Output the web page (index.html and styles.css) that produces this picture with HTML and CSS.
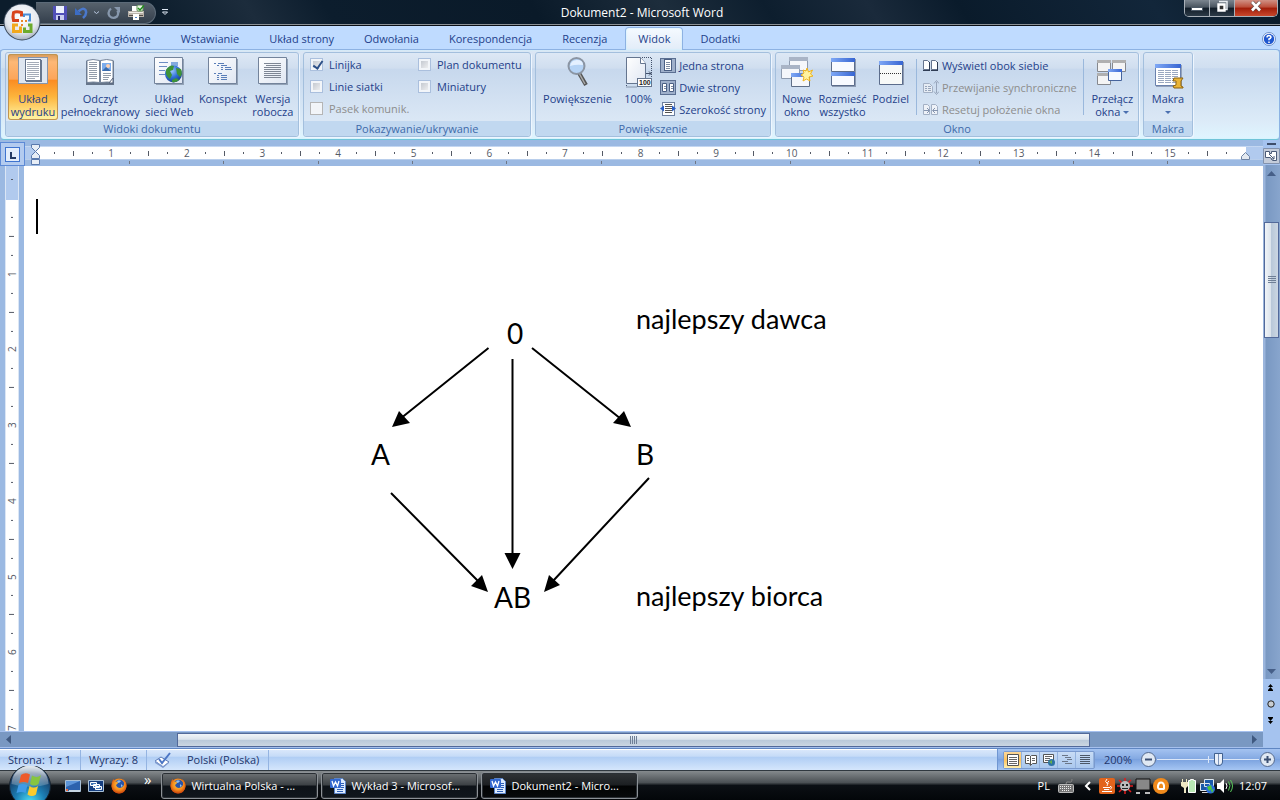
FILE: index.html
```html
<!DOCTYPE html>
<html lang="pl">
<head>
  <meta charset="UTF-8" />
  <meta name="viewport" content="width=device-width, initial-scale=1.0" />
  <title>Dokument2 - Microsoft Word</title>
  <link rel="stylesheet" href="styles.css">
</head>
<body>
  <!-- gradients shared by the icons -->
  <svg class="defs" width="0" height="0" aria-hidden="true">
    <defs>
      <linearGradient id="paper" x1="0" y1="0" x2="1" y2="1"><stop offset="0" stop-color="#fff"/><stop offset="1" stop-color="#dfe6f2"/></linearGradient>
      <linearGradient id="bar" x1="0" y1="0" x2="1" y2="0"><stop offset="0" stop-color="#7fa8f5"/><stop offset="1" stop-color="#3765d2"/></linearGradient>
      <radialGradient id="globe" cx="0.4" cy="0.3" r="0.8"><stop offset="0" stop-color="#9cc8ff"/><stop offset="0.5" stop-color="#2f6fd6"/><stop offset="1" stop-color="#12337f"/></radialGradient>
      <radialGradient id="fox" cx="0.5" cy="0.4" r="0.6"><stop offset="0" stop-color="#ffd24a"/><stop offset="0.6" stop-color="#f58a1c"/><stop offset="1" stop-color="#c8420b"/></radialGradient>
      <radialGradient id="orb" cx="0.5" cy="0.9" r="0.9"><stop offset="0" stop-color="#4fe0f5"/><stop offset="0.4" stop-color="#1c7fb5"/><stop offset="0.8" stop-color="#173a63"/><stop offset="1" stop-color="#6c8fae"/></radialGradient>
      <linearGradient id="orbShine" x1="0" y1="0" x2="0" y2="1"><stop offset="0" stop-color="#fff" stop-opacity="0.85"/><stop offset="1" stop-color="#fff" stop-opacity="0.15"/></linearGradient>
      <radialGradient id="pearl" cx="0.5" cy="0.35" r="0.65"><stop offset="0" stop-color="#fff"/><stop offset="0.7" stop-color="#e3e7ee"/><stop offset="1" stop-color="#a9b3c2"/></radialGradient>
      <symbol id="firefox" viewBox="0 0 16 16">
        <circle cx="8" cy="8" r="7.500" fill="url(#fox)"/>
        <circle cx="8.500" cy="6.500" r="4.800" fill="#2a55a8"/>
        <path d="M6 3q2-1.500 4 0q-1 2-3 2zM10 6l2 2-2 1z" fill="#8fc0ee"/>
        <path d="M1 4Q2 1 3 1q0 2 1 3q2-1 3 0q0 2-2 3q1 3 4 3q3-.500 4-3q1-3-1-6q4 3 3.500 7.500Q14.500 15 8 15.500Q1 15 .500 8z" fill="url(#fox)"/>
      </symbol>
      <symbol id="wordicon" viewBox="0 0 16 16">
        <path d="M4.500 .500h8l3 3v12h-11z" fill="#dcebff" stroke="#5b84c8"/>
        <path d="M7 11.500h6M7 13.500h6M11 5.500h3M11 7.500h3M11 9.500h3" stroke="#2c5db5"/>
        <rect x="0" y="1" width="11" height="9" rx="1" fill="#3368cf"/>
        <path d="M2 3l1.500 5L5.500 4 7.500 8 9 3" fill="none" stroke="#fff" stroke-width="1.300"/>
      </symbol>
    </defs>
  </svg>

  <header class="titlebar">
    <button class="office" aria-label="Przycisk pakietu Office">
      <svg width="38" height="38" viewBox="0 0 38 38">
        <circle cx="19" cy="19" r="18.500" fill="#39485a"/>
        <circle cx="19" cy="19" r="17.500" fill="url(#pearl)"/>
        <g fill="none" stroke-width="3">
          <path d="M16 17.500h-5.500q-1-4 0-8q3-1.500 8 0v4" stroke="#d8421b"/>
          <path d="M21 14v-2.500h6v6h-2" stroke="#4a8ed8" stroke-width="2"/>
          <path d="M15 22h-4.500v6.500h7v-5" stroke="#f2a81d"/>
          <path d="M25 22h3v6.500h-6.500v-4" stroke="#6cab2c"/>
        </g>
        <path d="M18 17h2v2h-2zM22 17h2v2h-2zM18 21h2v2h-2z" fill="#e88a2a"/>
      </svg>
    </button>
    <div class="quick">
      <button aria-label="Zapisz"><svg width="14" height="14" viewBox="0 0 14 14"><path d="M0 0h14v14H1L0 13z" fill="#5150b8"/><path d="M3 0h8v7H3z" fill="#eef2ff"/><path d="M3 9h8v5H3z" fill="#c9cdf0"/><path d="M5 10h2v4H5z" fill="#25246e"/></svg></button>
      <button class="undo" aria-label="Cofnij"><svg width="14" height="14" viewBox="0 0 14 14"><path d="M3.500 5.500Q8 1 10.500 4Q12.500 8 8 12" fill="none" stroke="#4a78cc" stroke-width="2.500"/><path d="M0 2v7h7z" fill="#3b6cc4"/></svg></button>
      <button class="more" aria-label="Lista cofnij"><svg width="5" height="4" viewBox="0 0 5 4"><path d="M0 .500l2.500 2L5 .500" fill="none" stroke="#b9c9e2"/></svg></button>
      <button class="redo" aria-label="Powtórz"><svg width="14" height="14" viewBox="0 0 14 14"><path d="M4 2.500Q0 6 2.500 10Q6 13.500 10 10.500Q12 8 10.500 4.500" fill="none" stroke="#8797ac" stroke-width="2.300"/><path d="M7 1h6v6z" fill="#8797ac"/></svg></button>
      <button aria-label="Szybkie drukowanie"><svg width="17" height="16" viewBox="0 0 17 16"><path d="M4 1h7v5H4z" fill="#fff"/><path d="M0 6h16v6H0z" fill="#b9b2aa"/><path d="M1 7h14v1H1z" fill="#efece8"/><path d="M1 10h14v1H1z" fill="#514b46"/><path d="M5 9h6v6H5z" fill="#fff"/><path d="M7 12h2v1H7z" fill="#4d80c8"/><rect x="9" y="0" width="6" height="6" rx="1" fill="#e8f3e4" stroke="#5d8f52"/><path d="M10 3l2 2 4-4.500" fill="none" stroke="#218c1c" stroke-width="1.500"/></svg></button>
    </div>
    <button class="customize" aria-label="Dostosuj pasek"><svg width="6" height="7" viewBox="0 0 6 7"><path d="M0 .500h6" stroke="#dfe8f4"/><path d="M.500 3h5L3 5.500z" fill="none" stroke="#dfe8f4"/></svg></button>
    <h1>Dokument2 - Microsoft Word</h1>
    <div class="window-buttons">
      <button class="min" aria-label="Minimalizuj"><svg width="12" height="12" viewBox="0 0 12 12"><path d="M.500 7.500h11v3H.500z" fill="#fff" stroke="#4b5866"/></svg></button>
      <button class="restore" aria-label="Przywróć"><svg width="12" height="13" viewBox="0 0 12 13"><path d="M3 1.500h8v8H9" fill="none" stroke="#e6eaef" stroke-width="1.500"/><path d="M2.500 4.500h6v6h-6z" fill="#333" stroke="#fff" stroke-width="2.400"/></svg></button>
      <button class="close" aria-label="Zamknij"><svg width="12" height="12" viewBox="0 0 12 12"><path d="M2 2l8 8.500M10 2l-8 8.500" stroke="#55423f" stroke-width="4"/><path d="M2 2l8 8.500M10 2l-8 8.500" stroke="#fff" stroke-width="2.600"/></svg></button>
    </div>
  </header>

  <nav class="tabs">
    <a href="#">Narzędzia główne</a>
    <a href="#">Wstawianie</a>
    <a href="#">Układ strony</a>
    <a href="#">Odwołania</a>
    <a href="#">Korespondencja</a>
    <a href="#">Recenzja</a>
    <a href="#" class="active">Widok</a>
    <a href="#">Dodatki</a>
    <button class="help" aria-label="Pomoc"><svg width="14" height="14" viewBox="0 0 14 14"><circle cx="7" cy="7" r="6.500" fill="#fff" stroke="#6d8fc9"/><circle cx="7" cy="7" r="5.200" fill="#1f57cf"/><path d="M5 5.500Q5 3.500 7 3.500Q9 3.700 9 5.200Q8.500 6.500 7 7v1.200M7 9.500v1.500" fill="none" stroke="#fff" stroke-width="1.500"/></svg></button>
  </nav>

  <section class="ribbon">
    <div class="group views">
      <div class="tools">
        <button class="big selected">
          <svg width="32" height="32" viewBox="0 0 32 32"><rect x="1.500" y=".500" width="29" height="26" fill="#dfe6f0" stroke="#8595ad"/><rect x="9" y="3" width="16" height="22" fill="#68778f"/><rect x="8.500" y="2.500" width="15" height="21" fill="#fff" stroke="#67758c"/><path d="M10 5.500h12M10 7.500h12M10 9.500h12M10 11.500h12M10 13.500h12M10 15.500h12M10 17.500h12M10 19.500h12M10 21.500h8" stroke="#a5acb8"/></svg>
          <span>Układ<br>wydruku</span>
        </button>
        <button class="big">
          <svg width="32" height="32" viewBox="0 0 32 32"><path d="M2 4l2-1h11l1 1 1-1h11l2 1v24H2z" fill="#66758a"/><path d="M3 3.500q6-2 12.500 0v22q-6-1-12.500 0zM16.500 3.500q6-2 12.500 0v22q-6-1-12.500 0z" fill="#fff" stroke="#75849a"/><path d="M5 5.500h8M5 7.500h8M5 9.500h8M5 11.500h8M5 13.500h8M5 15.500h8M5 17.500h8M5 19.500h8M5 21.500h8M19 16.500h8M19 18.500h8M19 20.500h6M19 22.500h5" stroke="#929caa"/><rect x="18" y="6" width="9" height="8" fill="#7cacec"/><circle cx="24" cy="9" r="2" fill="#fdd0b0"/><path d="M18 14l4-4 5 4z" fill="#3a6cae"/><path d="M25 26l4-5v5z" fill="#fff" stroke="#55627a"/></svg>
          <span>Odczyt<br>pełnoekranowy</span>
        </button>
        <button class="big">
          <svg width="32" height="32" viewBox="0 0 32 32"><path d="M3 2h28v26H3z" fill="#93a2b6"/><path d="M1.500 .500h28v26h-28z" fill="url(#paper)" stroke="#73839b"/><path d="M6 5.500h9M6 9.500h8M6 13.500h6M6 17.500h6" stroke="#6c8cc2"/><path d="M18 5h7v4h-7z" fill="#84aadf"/><circle cx="20.500" cy="17" r="8.500" fill="url(#globe)"/><path d="M13 13q4-6 8-4l-1 4-3 1 2 4-2 4q-5-3-4-9zM23 11l5 1q2 5-1 8l-3-3zM19 23l4-2 3 2q-3 3-7 2z" fill="#3e9338"/></svg>
          <span>Układ<br>sieci Web</span>
        </button>
        <button class="big">
          <svg width="32" height="32" viewBox="0 0 32 32"><path d="M3 2h28v26H3z" fill="#93a2b6"/><path d="M1.500 .500h28v26h-28z" fill="url(#paper)" stroke="#73839b"/><g stroke="#5a7eb8"><path d="M7 6.500h2M11 6.500h6M10 8.500h2M14 8.500h6M14 10.500h2M18 10.500h6M14 12.500h2M18 12.500h7M7 16.500h2M11 16.500h4M10 18.500h2M14 18.500h6M10 20.500h2M14 20.500h6M10 22.500h2M14 22.500h6"/></g></svg>
          <span>Konspekt</span>
        </button>
        <button class="big">
          <svg width="32" height="32" viewBox="0 0 32 32"><path d="M3 2h28v26H3z" fill="#93a2b6"/><path d="M1.500 .500h28v26h-28z" fill="url(#paper)" stroke="#73839b"/><path d="M7 6.500h17M9 8.500h15M7 10.500h17M7 12.500h17M7 14.500h17M7 16.500h17M7 18.500h17M7 20.500h17" stroke="#7e8694"/></svg>
          <span>Wersja<br>robocza</span>
        </button>
      </div>
      <h2>Widoki dokumentu</h2>
    </div>

    <div class="group show">
      <div class="tools checks">
        <label><input type="checkbox" checked> Linijka</label>
        <label><input type="checkbox"> Plan dokumentu</label>
        <label><input type="checkbox"> Linie siatki</label>
        <label><input type="checkbox"> Miniatury</label>
        <label class="off"><input type="checkbox" disabled> Pasek komunik.</label>
      </div>
      <h2>Pokazywanie/ukrywanie</h2>
    </div>

    <div class="group zoom">
      <div class="tools">
        <button class="big">
          <svg width="32" height="32" viewBox="0 0 32 32"><path d="M17 16l7 12" stroke="#555" stroke-width="4"/><path d="M17 16l6 11" stroke="#aaa" stroke-width="1.500"/><circle cx="14.500" cy="9" r="8" fill="#b5d3f5" stroke="#8b95a3" stroke-width="2"/><path d="M8 9q1-6 7-6t6 5q-7-1-13 1z" fill="#e4f0ff"/></svg>
          <span>Powiększenie</span>
        </button>
        <button class="big">
          <svg width="32" height="32" viewBox="0 0 32 32"><path d="M20 .500h9.500V30M4.500 28v2H15" fill="none" stroke="#42506a" stroke-dasharray="1 1"/><path d="M4.500 .500h14l5 6v20h-19z" fill="url(#paper)" stroke="#65758f"/><path d="M18.500 .500v6h5" fill="#fff" stroke="#65758f"/><path d="M24 16.500h5M27 14.500l2 2-2 2" fill="none" stroke="#42506a"/><rect x="15.500" y="21.500" width="14" height="8" fill="#fff" stroke="#65758f"/><text x="17" y="28" font-size="7" font-weight="700" fill="#222">100</text></svg>
          <span>100%</span>
        </button>
        <div class="list">
          <button><svg width="16" height="16" viewBox="0 0 16 16"><rect x=".500" y="1.500" width="15" height="14" fill="#9fb0cb" stroke="#5b6f92"/><rect x="4.500" y="2.500" width="7" height="11" fill="#fff" stroke="#4a5f84"/><path d="M6 5.500h4M6 7.500h4M6 9.500h4M6 11.500h4" stroke="#7d8ba3"/></svg>Jedna strona</button>
          <button><svg width="16" height="16" viewBox="0 0 16 16"><rect x=".500" y="1.500" width="15" height="14" fill="#9fb0cb" stroke="#5b6f92"/><path d="M2.500 4.500h4v8h-4zM9.500 4.500h4v8h-4z" fill="#fff" stroke="#4a5f84"/><path d="M4 7.500h2M4 9.500h2M11 7.500h2M11 9.500h2" stroke="#7d8ba3"/></svg>Dwie strony</button>
          <button><svg width="16" height="16" viewBox="0 0 16 16"><rect x="2.500" y="1.500" width="12" height="13" fill="#fff" stroke="#6c7f9f"/><path d="M5 3.500h7M5 5.500h7M5 7.500h7M5 9.500h7M5 11.500h7" stroke="#555"/><path d="M0 7.500l4-3v6zM16 7.500l-4-3v6z" fill="#2a5fc8"/></svg>Szerokość strony</button>
        </div>
      </div>
      <h2>Powiększenie</h2>
    </div>

    <div class="group window">
      <div class="tools">
        <button class="big">
          <svg width="32" height="32" viewBox="0 0 32 32"><path d="M8.500 .500h18v13h-18z" fill="#f5f7fb" stroke="#8f9cb0"/><path d="M8 0h19v4H8z" fill="#a9b4c6"/><path d="M.500 8.500h18v13h-18z" fill="#f5f7fb" stroke="#8f9cb0"/><path d="M0 8h19v4H0z" fill="#a9b4c6"/><path d="M10.500 16.500h18v13h-18z" fill="#f5f7fb" stroke="#5f6f88"/><path d="M10 16h19v4H10z" fill="url(#bar)"/><path d="M26 11l1.500 4 4-2-2 4 2.500 2-4 1 1 4-3.500-2-3.500 2 1-4-3-2 3-2-1-3 3 1z" fill="#fff3a0" stroke="#f0b41c"/></svg>
          <span>Nowe<br>okno</span>
        </button>
        <button class="big">
          <svg width="32" height="32" viewBox="0 0 32 32"><path d="M5 2h24v28H5z" fill="#8d9bb2"/><path d="M4.500 1.500h23v13h-23zM4.500 15.500h23v13h-23z" fill="#f8faff" stroke="#5c6d8c"/><path d="M4 1h24v4H4zM4 15h24v4H4z" fill="url(#bar)"/></svg>
          <span>Rozmieść<br>wszystko</span>
        </button>
        <button class="big">
          <svg width="32" height="32" viewBox="0 0 32 32"><path d="M5 5h24v23H5z" fill="#8d9bb2"/><path d="M4.500 4.500h23v23h-23z" fill="#f8faf8" stroke="#5c6d8c"/><path d="M4 4h24v4H4z" fill="url(#bar)"/><path d="M5 16.500h22" stroke="#333" stroke-dasharray="1 1"/></svg>
          <span>Podziel</span>
        </button>
        <div class="list split">
          <button><svg width="16" height="16" viewBox="0 0 16 16"><path d="M.500 3.500h4l2 2v7h-6zM8.500 3.500h4l2 2v7h-6z" fill="#fff" stroke="#66758f"/><path d="M0 13h7v1H0zM8 13h7v1H8zM6 5h1v8H6zM14 5h1v8h-1z" fill="#2f3d55"/></svg>Wyświetl obok siebie</button>
          <button disabled><svg width="16" height="16" viewBox="0 0 16 16"><path d="M.500 4.500h6l3 3v6h-9z" fill="#e6ecf4" stroke="#a3b0c4"/><path d="M2 7.500h2M5 7.500h3M2 9.500h2M5 9.500h3M2 11.500h2M5 11.500h3" stroke="#97a5bb"/><path d="M13.500 3v11M11 4.500l2.500-3 2.500 3M11 12.500l2.500 3 2.500-3" fill="none" stroke="#97a5bb"/></svg>Przewijanie synchroniczne</button>
          <button disabled><svg width="16" height="16" viewBox="0 0 16 16"><path d="M.500 3.500h4l2 2v8h-6zM8.500 3.500h4l2 2v8h-6z" fill="#eef2f8" stroke="#a3b0c4"/><path d="M1 9.500h5M4 7l2.500 2.500L4 12M15 9.500h-5M12 7L9.500 9.500 12 12" fill="none" stroke="#8595b0"/></svg>Resetuj położenie okna</button>
        </div>
        <button class="big">
          <svg width="32" height="32" viewBox="0 0 32 32"><path d="M1.500 3.500h13v11h-13zM16.500 3.500h13v11h-13zM1.500 16.500h13v11h-13z" fill="#f4f4f4" stroke="#85888e"/><path d="M1 3h14v3H1zM16 3h14v3H16zM1 16h14v3H1z" fill="#b0b0b0"/><path d="M12.500 12.500h13v11h-13z" fill="#f5f9ff" stroke="#46649c"/><path d="M12 12h14v3H12z" fill="url(#bar)"/></svg>
          <span>Przełącz<br>okna <i class="arrow"></i></span>
        </button>
      </div>
      <h2>Okno</h2>
    </div>

    <div class="group macros">
      <div class="tools">
        <button class="big">
          <svg width="32" height="32" viewBox="0 0 32 32"><path d="M4 8h26v22H4z" fill="#94a2ba"/><path d="M3.500 7.500h25v21h-25z" fill="#fff" stroke="#6a81ad"/><path d="M3 7h26v4H3z" fill="url(#bar)"/><path d="M6 13.500h20M6 15.500h20M6 17.500h20M6 19.500h20M6 21.500h20M6 23.500h20M6 25.500h20" stroke="#9aa8c0" stroke-dasharray="6 1"/><path d="M22 21h9l-2 3v5l2 1v1h-9l-1-2 3-1v-4h-3z" fill="#e9b437" stroke="#8c6311"/></svg>
          <span>Makra<br><i class="arrow"></i></span>
        </button>
      </div>
      <h2>Makra</h2>
    </div>
  </section>

  <main class="work">
    <div class="left">
      <div class="ruler-row">
        <button class="tabstop" aria-label="Tabulator"><svg width="15" height="15" viewBox="0 0 15 15"><rect x=".500" y=".500" width="14" height="14" fill="#e3edfb" stroke="#3f74cf"/><path d="M5 5h2v5h4v2H5z" fill="#243a63"/></svg></button>
        <div class="ruler">
          <div class="scale" id="scale-x">
            <svg class="indent" width="10" height="22" viewBox="0 0 10 22"><path d="M.500 .500h8v3l-4 4-4-4zM4.500 7.500l4 4v3h-8v-3z" fill="#e8eef6" stroke="#5a79ad"/><path d="M.500 15.500h8v5h-8z" fill="#e8eef6" stroke="#5a79ad"/></svg>
            <svg class="indent-right" width="9" height="8" viewBox="0 0 9 8"><path d="M.500 7.500v-3l4-4 4 4v3z" fill="#e3e9f0" stroke="#6d83a5"/></svg>
          </div>
          <div class="stops" id="stops"></div>
        </div>
      </div>
      <div class="desk">
        <div class="vruler"><div class="vscale" id="scale-y"></div></div>
        <article class="page">
          <div class="cursor"></div>
          <svg class="diagram" width="480" height="320" viewBox="0 0 480 320">
            <g stroke="#000" stroke-width="2">
              <path d="M128.500 48L40 119M152.500 59v200M172 48l89 71M31 193l87 88M289 178l-96 103"/>
            </g>
            <path d="M32 127l7-16 11 12zM152.500 269l-8-16h16zM271 127l-18-4 11-12zM128 292l-17-6 11-11zM184 292l5-17 11 10z"/>
            <text x="147" y="44">0</text>
            <text x="11" y="165">A</text>
            <text x="276" y="165">B</text>
            <text x="134" y="308">AB</text>
            <text class="note" x="276" y="29">najlepszy dawca</text>
            <text class="note" x="276" y="306">najlepszy biorca</text>
          </svg>
        </article>
      </div>
      <div class="hscroll">
        <svg width="5" height="9" viewBox="0 0 5 9"><path d="M5 0v9L0 4.500z" fill="#3f5980"/></svg>
        <div class="hthumb"><svg width="8" height="8" viewBox="0 0 8 8"><path d="M.500 0v8M2.500 0v8M4.500 0v8M6.500 0v8" stroke="#6f7f96"/></svg></div>
        <svg width="5" height="9" viewBox="0 0 5 9"><path d="M0 0v9l5-4.500z" fill="#3f5980"/></svg>
      </div>
    </div>
    <div class="right">
      <div class="splitter"></div>
      <button class="ruler-toggle" aria-label="Linijka"><svg width="17" height="16" viewBox="0 0 17 16"><path d="M.500 .500h16v15H.500z" fill="#c4ccda" stroke="#8292ae"/><path d="M2.500 3.500h4v2h2v-2h5v9h-4l-2-3h-5z" fill="#fff" stroke="#4b5b78"/><path d="M6 6l5 5M11 8v3h-3" fill="none" stroke="#4b5b78"/></svg></button>
      <div class="vscroll">
        <svg width="9" height="5" viewBox="0 0 9 5"><path d="M0 5h9L4.500 0z" fill="#465f88"/></svg>
        <div class="vthumb"><svg width="8" height="8" viewBox="0 0 8 8"><path d="M0 .500h8M0 2.500h8M0 4.500h8M0 6.500h8" stroke="#6f7f96"/></svg></div>
        <svg width="9" height="5" viewBox="0 0 9 5"><path d="M0 0h9L4.500 5z" fill="#465f88"/></svg>
      </div>
      <div class="browse">
        <button aria-label="Poprzednia strona"><svg width="7" height="7" viewBox="0 0 7 7"><path d="M3.500 0L6 3H1zM3.500 3L6 6H1zM1 6h5v1H1z"/></svg></button>
        <button aria-label="Wybierz obiekt"><svg width="8" height="8" viewBox="0 0 8 8"><circle cx="4" cy="4" r="3.200" fill="#c9cdd2" stroke="#222"/></svg></button>
        <button aria-label="Następna strona"><svg width="7" height="7" viewBox="0 0 7 7"><path d="M1 0h5v1H1zM3.500 4L6 1H1zM3.500 7L6 4H1z"/></svg></button>
      </div>
    </div>
  </main>

  <footer class="status">
    <button class="cell pages">Strona: 1 z 1</button>
    <button class="cell words">Wyrazy: 8</button>
    <button class="cell proof"><svg width="17" height="16" viewBox="0 0 17 16"><path d="M1 9l6-4 8 5-6 5z" fill="#fff" stroke="#5a79b5"/><path d="M1 9v2l8 5 6-5v-1l-6 4z" fill="#7f9bd0"/><path d="M5 7l3 4 8-10" fill="none" stroke="#4c76c4" stroke-width="2"/></svg>Polski (Polska)</button>
    <div class="status-right">
      <div class="modes">
        <button class="on" aria-label="Układ wydruku"><svg width="12" height="12" viewBox="0 0 12 12"><path d="M.500 .500h11v11H.500z" fill="#fff" stroke="#555"/><path d="M2 3.500h8M2 5.500h8M2 7.500h8M2 9.500h8" stroke="#666"/></svg></button>
        <button aria-label="Odczyt pełnoekranowy"><svg width="12" height="12" viewBox="0 0 12 12"><path d="M.500 1.500h4l1 1 1-1h5v8h-4l-2 2-1-2h-4zM5.500 2v9" fill="#fff" stroke="#555"/><path d="M2 4.500h2M2 6.500h2M7 4.500h3M7 6.500h3" stroke="#666"/></svg></button>
        <button aria-label="Układ sieci Web"><svg width="12" height="12" viewBox="0 0 12 12"><path d="M.500 .500h10v8H.500z" fill="#fff" stroke="#555"/><path d="M2 2.500h7M2 4.500h5M2 6.500h4" stroke="#666"/><circle cx="8.500" cy="8.500" r="3.500" fill="#2e72a4"/><path d="M6 8l3-2v4z" fill="#65b04e"/></svg></button>
        <button aria-label="Konspekt"><svg width="12" height="12" viewBox="0 0 12 12"><path d="M1 1.500h6M4 3.500h6M6 5.500h5M1 7.500h6M4 9.500h7" stroke="#6b7789"/></svg></button>
        <button aria-label="Wersja robocza"><svg width="12" height="12" viewBox="0 0 12 12"><path d="M1 1.500h10M1 3.500h10M1 5.500h10M1 7.500h10M1 9.500h10" stroke="#4c5868"/></svg></button>
      </div>
      <button class="percent">200%</button>
      <button class="round" aria-label="Pomniejsz"><svg width="15" height="15" viewBox="0 0 15 15"><circle cx="7.500" cy="7.500" r="7" fill="#dfe8f3" stroke="#54698d"/><path d="M4 7.500h7" stroke="#3b4f72" stroke-width="2"/></svg></button>
      <input type="range" min="0" max="100" value="61" aria-label="Powiększenie">
      <button class="round" aria-label="Powiększ"><svg width="15" height="15" viewBox="0 0 15 15"><circle cx="7.500" cy="7.500" r="7" fill="#dfe8f3" stroke="#54698d"/><path d="M4 7.500h7M7.500 4v7" stroke="#3b4f72" stroke-width="2"/></svg></button>
    </div>
  </footer>

  <footer class="taskbar">
    <button class="start" aria-label="Start">
      <svg width="44" height="34" viewBox="0 0 44 34">
        <circle cx="22" cy="20" r="20.500" fill="url(#orb)" stroke="#16222e"/>
        <path d="M3.500 18a18.500 18.500 0 0 1 37 0q-18 6-37 0z" fill="url(#orbShine)"/>
        <path d="M13 9q4-3 9-.500L20 17q-4-2-9 0z" fill="#ee5a2a"/>
        <path d="M24 9.500q5 3 9-.500l-2.500 9q-4 3-8.500 0z" fill="#87c540"/>
        <path d="M10.500 19q4-2 9 0l-2 8q-4-2-9 0z" fill="#3f9be8"/>
        <path d="M21.500 20q4 3 8.500 0l-2 8.500q-4 3-8.500 0z" fill="#fccb2d"/>
      </svg>
    </button>
    <div class="launch">
      <button aria-label="Pokaż pulpit"><svg width="16" height="16" viewBox="0 0 16 16"><path d="M.500 2.500h15v11H.500z" fill="#2c62ad" stroke="#a9c0d6"/><path d="M1 3h14L1 9z" fill="#5c95da"/><path d="M4 12h11v2H4z" fill="#c6d6e2"/><path d="M1 11h2v2H1z" fill="#e8663a"/></svg></button>
      <button aria-label="Przełącz okna"><svg width="16" height="16" viewBox="0 0 16 16"><path d="M.500 2.500h15v11H.500z" fill="#163f80" stroke="#a9c0d6"/><path d="M2.500 4.500h6v3h-6zM5.500 6.500h6v3h-6zM7.500 8.500h6v3h-6z" fill="#3f74b5" stroke="#fff"/></svg></button>
      <button aria-label="Firefox"><svg width="16" height="16"><use href="#firefox"/></svg></button>
      <button class="chevrons">»</button>
    </div>
    <div class="tasks">
      <button><svg width="16" height="16"><use href="#firefox"/></svg>Wirtualna Polska - ...</button>
      <button><svg width="16" height="16"><use href="#wordicon"/></svg>Wykład 3 - Microsof...</button>
      <button class="current"><svg width="16" height="16"><use href="#wordicon"/></svg>Dokument2 - Micro...</button>
    </div>
    <div class="tray">
      <span class="lang">PL</span>
      <svg width="16" height="16" viewBox="0 0 16 16"><path d="M8 6Q8 3 11 4T14 1" fill="none" stroke="#888"/><rect x=".500" y="6.500" width="15" height="8" rx="1" fill="#777" stroke="#bbb"/><path d="M2 8.500h12M2 10.500h12M4 12.500h8" stroke="#eee" stroke-dasharray="1 1"/></svg>
      <svg class="expand" width="8" height="10" viewBox="0 0 8 10"><path d="M6 1L2 5l4 4" fill="none" stroke="#fff" stroke-width="2"/></svg>
      <span class="icons">
        <svg width="16" height="16" viewBox="0 0 16 16"><rect width="16" height="16" rx="2" fill="#e2641c"/><path d="M8 1q-3 3 0 4q1 1 0 3M10 3q-2 1-1 3M4 9.500h7M5 11.500h5M3 13.500h10M11 8.500q3 0 0 3" fill="none" stroke="#fff"/></svg>
        <svg width="16" height="16" viewBox="0 0 16 16"><path d="M8 0v16M0 8h16M2 2l12 12M14 2L2 14" stroke="#e21d1d" stroke-width="1.500"/><circle cx="8" cy="8" r="5" fill="#bbb"/><path d="M5 6h2v2H5zM9 6h2v2H9zM5 10h6v1H5z" fill="#222"/></svg>
        <svg width="16" height="16" viewBox="0 0 16 16"><path d="M1 1h14v11H1z" fill="#888" stroke="#111"/><path d="M1 14h4v2H1zM10 14h5v2h-5z" fill="#bbb"/></svg>
        <svg width="16" height="16" viewBox="0 0 16 16"><circle cx="8" cy="8" r="8" fill="#f08a1c"/><path d="M11 11V7.500q-.500-3-3-3t-3 3.500 3 3h3.500" fill="none" stroke="#fff" stroke-width="2"/></svg>
      </span>
      <span class="icons power">
        <svg width="16" height="16" viewBox="0 0 16 16"><path d="M7.500 2.500h2v-1h3v1h2v12h-7z" fill="#b9e8b4" stroke="#fff"/><path d="M0 4h7v4l-2 2v5H3v-5L0 8zM1 1h1v3H1zM5 1h1v3H5z" fill="#eee8c4"/></svg>
        <svg width="16" height="16" viewBox="0 0 16 16"><path d="M5.500 1.500h9v7h-9zM1.500 5.500h9v7h-9z" fill="#1a5aa8" stroke="#dfe8f0"/><path d="M3 14h6v1H3z" fill="#ddd"/><circle cx="11.500" cy="11" r="4.500" fill="#2c6ddb"/><path d="M8 9l4-2 1 4-3 2zM12 12l3-1-2 4z" fill="#4dc73c"/></svg>
        <svg width="16" height="16" viewBox="0 0 16 16"><path d="M0 5h3l4-4v14l-4-4H0z" fill="#fff"/><path d="M9 5q2 3 0 6" fill="none" stroke="#fff"/><path d="M11.500 3.500q3 4 0 9M13.500 2q4 6 0 12" fill="none" stroke="#59c95a"/></svg>
      </span>
      <time>12:07</time>
    </div>
  </footer>

  <script>
    // four marks to a centimetre: dot, line, dot, number
    function drawScale(id, count) {
      const scale = document.getElementById(id);
      for (let i = 1; i <= count; i++) {
        const mark = document.createElement("span");
        if (i % 4 === 0) {
          mark.textContent = i / 4;
        } else {
          mark.className = i % 2 === 0 ? "line" : "dot";
        }
        scale.appendChild(mark);
      }
    }

    drawScale("scale-x", 63);
    drawScale("scale-y", 28);

    for (let i = 0; i < 12; i++) {
      document.getElementById("stops").appendChild(document.createElement("span"));
    }
  </script>
</body>
</html>
```
FILE: styles.css
```css
* {
  box-sizing: border-box;
}

body {
  margin: 0;
  height: 100vh;
  display: flex;
  flex-direction: column;
  overflow: hidden;
  font-family: "Open Sans", "Noto Sans", sans-serif;
  font-size: 11px;
  line-height: 13px;
  color: #1e3f8a;
  background: #9bb9e2;
}

button {
  padding: 0;
  border: none;
  background: none;
  font: inherit;
  color: inherit;
  white-space: nowrap;
}

svg {
  display: block;
  flex: none;
}

.defs {
  position: absolute;
}

/* title bar */
.titlebar {
  position: relative;
  height: 26px;
  flex: none;
  display: flex;
  align-items: center;
  background: linear-gradient(58deg, #0c1d2c 12%, #1c2c3c 20%, #0c1d2d 26%, #0a1a29 42%, #1d2d3c 52%, #0d1e2e 60%, #1a2a3b 68%, #0a1b2b 75%, #12263a 90%, #0a1a28);
  border-bottom: 1px solid #0a0f16;
  box-shadow: inset 0 -1px #8b9196;
}

.office {
  position: absolute;
  left: 3px;
  top: 3px;
  z-index: 3;
}

.quick {
  display: flex;
  align-items: center;
  height: 22px;
  margin-left: 36px;
  padding: 0 10px 0 17px;
  border: 1px solid #5c6a78;
  border-left: none;
  border-radius: 0 11px 11px 0;
  background: linear-gradient(#56616c, #343f4c);
}

.undo {
  margin-left: 8px;
}

.more {
  margin-left: 5px;
}

.redo {
  margin: 0 7px 0 8px;
}

.customize {
  margin-left: 6px;
}

.titlebar h1 {
  position: absolute;
  left: 0;
  right: 0;
  margin: 0;
  padding-left: 4px;
  font-size: 12px;
  font-weight: 400;
  line-height: 28px;
  text-align: center;
  color: #fff;
  pointer-events: none;
}

.window-buttons {
  display: flex;
  align-self: flex-start;
  margin: 0 2px 0 auto;
  height: 17px;
  border: 1px solid #a9b0b8;
  border-top: none;
  border-radius: 0 0 5px 5px;
  overflow: hidden;
}

.window-buttons button {
  width: 25px;
  display: flex;
  justify-content: center;
  background: linear-gradient(#7b858f, #49545f 45%, #111c27 50%, #2c3a47);
  border-right: 1px solid #a9b0b8;
}

.window-buttons .close {
  width: 42px;
  border: none;
  background: linear-gradient(#d09185, #bb4c38 45%, #a01c08 50%, #c9482c);
}

/* tabs */
.tabs {
  display: flex;
  align-items: stretch;
  height: 24px;
  flex: none;
  margin-bottom: -1px;
  padding-left: 45px;
  padding-top: 1px;
  background: #bfdbff;
}

.tabs a {
  padding: 0 15px;
  line-height: 24px;
  color: #1e3f8a;
  text-decoration: none;
}

.tabs .active {
  position: relative;
  z-index: 2;
  margin: 0 2px 0 3px;
  padding: 0 12px;
  line-height: 22px;
  border: 1px solid #8db2e3;
  border-bottom: none;
  border-radius: 4px 4px 0 0;
  background: linear-gradient(#f5faff, #e2ecf8);
  box-shadow: inset 0 0 2px #bdf0ff;
}

.help {
  margin: 0 4px 0 auto;
}

/* ribbon */
.ribbon {
  display: flex;
  gap: 4px;
  flex: none;
  padding: 2px 4px;
  border: 1px solid #8db2e3;
  border-bottom-color: #6fc4d8;
  border-radius: 4px;
  background: linear-gradient(#dce7f5, #d0dff0 20%, #c6d8ee 21%, #dcebf8 80%, #dff5ff);
  box-shadow: inset 0 0 2px #c6f2ff;
}

.group {
  border: 1px solid #a3bfdd;
  border-radius: 3px;
  background: linear-gradient(#dde8f5, #d0deef 18%, #c7d8ed 20%, #dae7f5 80%);
  box-shadow: 1px 1px #eef6ff;
}

.views { width: 294px; }
.show { width: 228px; }
.zoom { width: 236px; }
.window { width: 364px; }
.macros { width: 50px; }

.group h2 {
  margin: 0;
  font-size: 11px;
  font-weight: 400;
  line-height: 15px;
  text-align: center;
  color: #3e6aaa;
  background: #c1d8f0;
  border-radius: 0 0 3px 3px;
}

.tools {
  display: flex;
  height: 68px;
  padding: 1px 2px;
}

.big {
  display: flex;
  flex-direction: column;
  align-items: center;
  gap: 3px;
  height: 66px;
  padding-top: 3px;
  flex: 1 1 auto;
}

.selected {
  border-radius: 3px;
  background: linear-gradient(#d79a5a, #fdb876 12%, #fca55a 38%, #fb8c22 40%, #fdb53c 65%, #ffef9c 95%);
  box-shadow: inset 0 0 0 1px #c09450;
}

.arrow {
  display: inline-block;
  border: 3px solid transparent;
  border-top-color: #4b70b0;
  border-bottom: none;
  vertical-align: 2px;
}

.checks {
  display: grid;
  grid-template-columns: 108px auto;
  grid-auto-rows: 22px;
  padding: 0 0 0 6px;
}

.checks label {
  display: flex;
  align-items: center;
  gap: 6px;
  white-space: nowrap;
}

.checks input {
  appearance: none;
  width: 13px;
  height: 13px;
  margin: 0;
  border: 1px solid #aabfdd;
  background: linear-gradient(135deg, #b9bfc8, #f8f8f8);
  box-shadow: inset 0 0 0 2px #f2f5f9;
}

.checks input:checked::after {
  content: "";
  display: block;
  width: 4px;
  height: 8px;
  margin: 0 0 0 4px;
  border: solid #2c4f87;
  border-width: 0 2px 2px 0;
  transform: rotate(35deg);
}

.checks input:disabled {
  border-color: #b5b5b5;
  background: #f2f4f7;
}

.checks .off,
.list button:disabled {
  color: #8d8d8d;
}

.list {
  display: flex;
  flex-direction: column;
  margin: 0 2px 0 1px;
}

.list button {
  display: flex;
  align-items: center;
  gap: 3px;
  flex: none;
  height: 22px;
}

.split {
  height: 56px;
  margin: 5px 5px 0 4px;
  padding: 0 6px;
  justify-content: center;
  border: solid #9ab8dc;
  border-width: 0 1px;
}

/* workspace */
.work {
  flex: 1;
  min-height: 0;
  display: flex;
}

.left {
  flex: 1;
  min-width: 0;
  display: flex;
  flex-direction: column;
}

.ruler-row {
  display: flex;
  height: 26px;
  flex: none;
  padding-top: 2px;
}

.tabstop {
  width: 25px;
  padding: 4px;
  border: 1px solid #5d8ad6;
  background: #b3cbef;
}

.ruler {
  flex: 1;
  padding: 5px 0 0 10px;
  background: linear-gradient(#9bb9e2 4px, #d6e3f5 4px, #b1caee 5px, #b1caee 17px, #d6e3f5 17px, #9bb9e2 18px);
}

.scale {
  position: relative;
  display: flex;
  height: 12px;
  margin-right: 17px;
  padding: 0 10px;
  background: #fff;
  font-size: 10px;
  line-height: 12px;
  color: #555a66;
}

.scale span,
.vscale span {
  flex: 1 1 0;
  min-width: 0;
  min-height: 0;
  display: flex;
  justify-content: center;
  align-items: center;
}

.dot::before,
.line::before {
  content: "";
  width: 1px;
  height: 2px;
  background: #555a66;
}

.line::before {
  height: 5px;
}

.indent {
  position: absolute;
  left: -4px;
  top: -3px;
}

.indent-right {
  position: absolute;
  right: -4px;
  bottom: -1px;
}

.stops {
  display: flex;
  height: 3px;
  margin: 2px 48px 0 47px;
}

.stops span {
  flex: 1;
  background: linear-gradient(#6f7684, #6f7684) center / 1px 3px no-repeat;
}

.desk {
  flex: 1;
  min-height: 0;
  display: flex;
}

.vruler {
  width: 14px;
  margin: 0 5px;
  padding-top: 34px;
  overflow: hidden;
  display: flex;
  flex-direction: column;
  border: solid #dbe6f5;
  border-width: 0 1px;
  background:
    linear-gradient(#555a66, #555a66) 5px 13px / 2px 1px no-repeat,
    linear-gradient(#b1caee 34px, #fff 34px);
}

.vscale {
  flex: 1;
  display: flex;
  flex-direction: column;
  margin-bottom: -7px;
  padding-top: 8px;
  font-size: 10px;
  line-height: 12px;
  color: #555a66;
}

.vscale span {
  writing-mode: vertical-rl;
  transform: rotate(180deg);
}

.vscale .dot::before {
  width: 2px;
  height: 1px;
}

.vscale .line::before {
  width: 5px;
  height: 1px;
}

.page {
  flex: 1;
  background: #fff;
}

.cursor {
  width: 2px;
  height: 35px;
  margin: 33px 0 66px 12px;
  background: #000;
}

.diagram {
  margin-left: 336px;
  font-family: Lato, "Open Sans", sans-serif;
  font-size: 28px;
}

.note {
  font-size: 27px;
}

.big text {
  font-family: "Liberation Sans", sans-serif;
}

/* scroll bars */
.hscroll {
  display: flex;
  align-items: center;
  height: 17px;
  flex: none;
  padding: 0 6px;
  background: #7998c2;
  border: solid #a5c0ee;
  border-width: 1px 0;
}

.hthumb {
  display: flex;
  align-items: center;
  justify-content: center;
  width: 73%;
  height: 14px;
  margin: 0 auto 0 166px;
  border: 1px solid #52699a;
  background: linear-gradient(#f0f4f8, #dbe3ec 45%, #b9c8d9 50%, #cbd6e2);
}

.right {
  width: 17px;
  display: flex;
  flex-direction: column;
  background: #a5c3ef;
}

.splitter {
  height: 2px;
  margin: 3px 4px 3px;
  background: #3e4e6b;
}

.vscroll {
  flex: 1;
  display: flex;
  flex-direction: column;
  align-items: center;
  margin-top: 1px;
  padding: 6px 0 5px;
  background: linear-gradient(90deg, #9bb5dc 2px, #7998c2 3px, #88a5cd);
}

.vthumb {
  display: flex;
  align-items: center;
  justify-content: center;
  width: 15px;
  height: 23%;
  margin: 46px 0 auto;
  border: 1px solid #52699a;
  background: linear-gradient(90deg, #f0f4f8, #dbe3ec 45%, #b9c8d9 50%, #cbd6e2);
}

.browse {
  display: flex;
  flex-direction: column;
  align-items: center;
  justify-content: space-between;
  height: 69px;
  padding: 5px 2px 24px 0;
}

/* status bar */
.status {
  display: flex;
  align-items: center;
  height: 22px;
  flex: none;
  border-top: 1px solid #5f86c2;
  box-shadow: inset 0 1px #fff;
  background: linear-gradient(#dce9fb, #c5dbf7 35%, #afcdf4 38%, #d5e6fc);
  color: #22356b;
}

.cell {
  height: 20px;
  border-right: 1px solid #94b4e2;
  text-align: left;
}

.pages {
  width: 81px;
  padding-left: 8px;
}

.words {
  width: 66px;
  padding-left: 8px;
}

.proof {
  display: flex;
  align-items: center;
  gap: 16px;
  width: 122px;
  padding-left: 7px;
}

.status-right {
  display: flex;
  align-items: center;
  height: 21px;
  margin-left: auto;
  padding: 0 5px;
  border-left: 1px solid #6f96d2;
  background: linear-gradient(#a4c3f1, #85aae3 45%, #7ba2df 50%, #a6c6f3);
}

.modes {
  display: flex;
  height: 18px;
  border: 1px solid #7a9ace;
  border-radius: 2px;
  background: linear-gradient(#c8dcf5, #aac8ee);
}

.modes button {
  width: 18px;
  display: flex;
  align-items: center;
  justify-content: center;
  border-right: 1px solid #93b2de;
}

.modes .on {
  background: linear-gradient(#fbd79a, #fcc25c 50%, #fff0b0);
}

.percent {
  margin: 0 9px;
}

.status input {
  appearance: none;
  width: 102px;
  height: 15px;
  margin: 0 1px;
  background:
    linear-gradient(#dbe7f8, #dbe7f8) 50% 50% / 1px 7px no-repeat,
    linear-gradient(#dbe7f8, #dbe7f8) 50% 50% / 100% 1px no-repeat;
}

.status input::-webkit-slider-thumb {
  appearance: none;
  width: 9px;
  height: 13px;
  border: 1px solid #41618f;
  border-radius: 1px 1px 5px 5px;
  background: linear-gradient(90deg, #e9f0fa 3px, #7d93b8 3px, #7d93b8 4px, #e9f0fa 4px);
}

/* taskbar */
.taskbar {
  position: relative;
  display: flex;
  align-items: center;
  height: 30px;
  flex: none;
  padding-left: 65px;
  border-top: 1px solid #30383f;
  background: linear-gradient(#858a8d, #4b5054 40%, #0b0f14 50%, #030609);
  color: #fff;
  font-size: 12px;
}

.start {
  position: absolute;
  left: 8px;
  bottom: 0;
}

.launch {
  display: flex;
  align-items: center;
  gap: 7px;
}

.chevrons {
  margin: 0 0 12px 10px;
  font-size: 15px;
}

.tasks {
  display: flex;
  gap: 3px;
  margin-left: 10px;
}

.tasks button {
  display: flex;
  align-items: center;
  gap: 5px;
  width: 157px;
  height: 27px;
  padding-left: 8px;
  border: 1px solid #8c9196;
  border-radius: 3px;
  box-shadow: inset 0 0 0 1px #2a2f34;
  background: linear-gradient(#6e7275, #3c4145 48%, #0d1218 52%, #10161c);
  font-size: 11px;
}

.tasks .current {
  background: linear-gradient(#303336, #1c1f22 48%, #020304 52%, #07090b);
}

.tray {
  display: flex;
  align-items: center;
  margin-left: auto;
  padding-right: 13px;
  font-size: 11px;
}

.lang {
  margin-right: 8px;
}

.expand {
  margin: 0 7px 0 10px;
}

.icons {
  display: flex;
  gap: 2px;
}

.power {
  margin: 0 6px 0 12px;
}
```
